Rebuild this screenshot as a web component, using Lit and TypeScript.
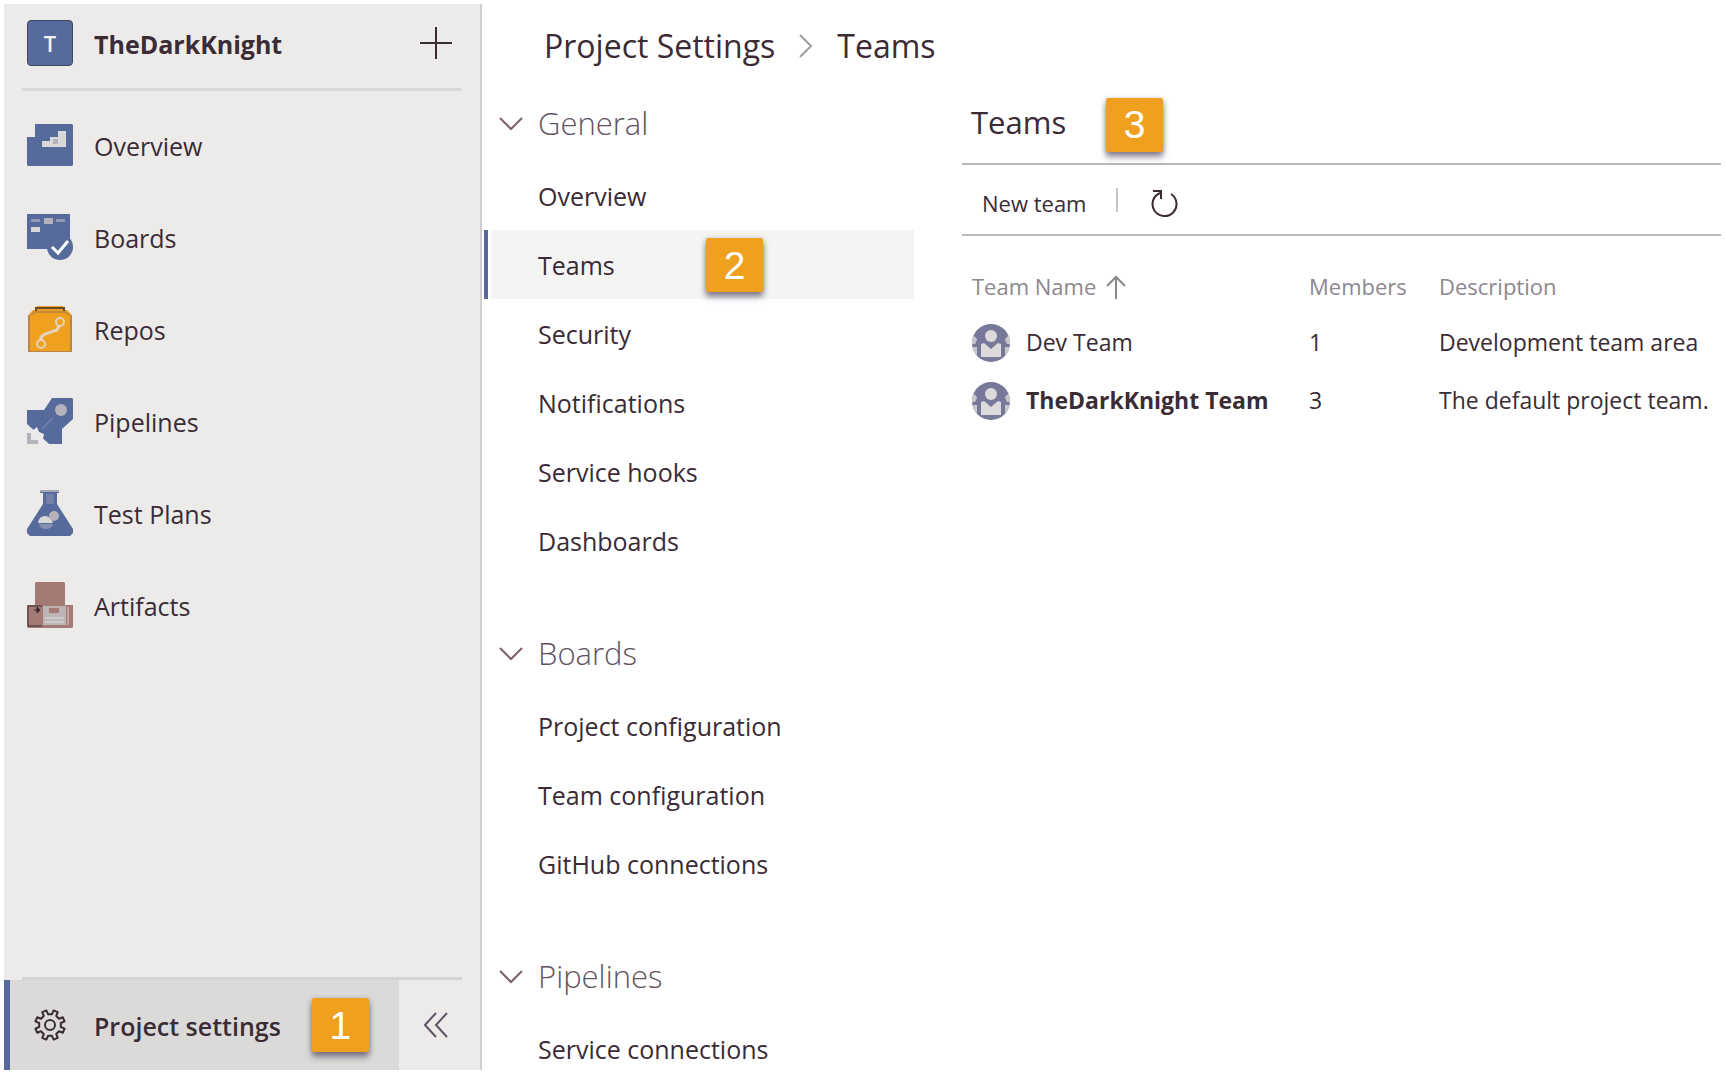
import { LitElement, html, svg, css, nothing } from "lit";
import { customElement, property, state } from "lit/decorators.js";
import { classMap } from "lit/directives/class-map.js";

const BLUE = "#566b9b";
const PALE = "#d9d8d8";
const ORANGE = "#f0a01f";
const BRICK = "#a47b74";
const INK = "#3a2b35";

/** Outline of a cog with evenly spaced, slightly tapered teeth. */
function cogPath(teeth: number, inner: number, outer: number, centre: number): string {
  const step = (Math.PI * 2) / teeth;
  const points: string[] = [];
  for (let i = 0; i < teeth; i++) {
    const mid = -Math.PI / 2 + step * (i + 0.5);
    const corners: Array<[number, number]> = [
      [mid - step * 0.27, inner],
      [mid - step * 0.19, outer],
      [mid + step * 0.19, outer],
      [mid + step * 0.27, inner],
    ];
    for (const [angle, radius] of corners) {
      const x = centre + Math.cos(angle) * radius;
      const y = centre + Math.sin(angle) * radius;
      points.push(`${x.toFixed(2)} ${y.toFixed(2)}`);
    }
  }
  return `M${points.join("L")}Z`;
}

const serviceIcons: Record<string, unknown> = {
  overview: svg`
    <path d="M8 2H45L46 3V43L45 44H1L0 43V15H8Z" fill=${BLUE}/>
    <path d="M15 25V19H23V15H31V9H39V25Z" fill=${PALE}/>
    <path d="M26 17H31V22H26Z" fill="#b5b2bb"/>`,
  boards: svg`
    <path d="M0 0H43V35H0Z" fill=${BLUE}/>
    <path d="M4 5H13V8H4ZM29 5H38V8H29Z" fill="#8f98b4"/>
    <path d="M17 4H26V10H17Z" fill="#b5b2bb"/>
    <path d="M4 13H13V18H4Z" fill=${PALE}/>
    <circle cx="33" cy="33" r="13" fill=${BLUE}/>
    <path d="M25 33L31 39L41 27" fill="none" stroke="#fff" stroke-width="3"/>`,
  repos: svg`
    <path d="M10 0H36V4H40L44 8V46H2V8L6 4H10Z" fill=${ORANGE}/>
    <path d="M9 5V2H37V5" fill="none" stroke="#6b4a2c" stroke-width="2"/>
    <path d="M4 9L8 6H38L42 9" fill="none" stroke="#c28a3c" stroke-width="2"/>
    <path d="M2 9V46H44V9" fill="none" stroke="#b98648" stroke-width="2"/>
    <g fill="none" stroke="#e3d3ba" stroke-width="2">
      <circle cx="14" cy="38" r="4"/>
      <circle cx="33" cy="16" r="4"/>
      <path d="M14 34V31L18 28L30 24L32 20" stroke-width="3"/>
    </g>`,
  pipelines: svg`
    <path d="M25 0H45L46 1V21L35 31V46H22L0 26V12H17Z" fill=${BLUE}/>
    <circle cx="34" cy="12" r="6" fill="#b5b2bb"/>
    <path d="M15 31L26 20" stroke="#8f98b4" stroke-width="1"/>
    <path d="M0 28L5 33L10 29L12 34L17 36L16 41L22 46H0Z" fill="#ecebea"/>
    <path d="M0 35H4V42H11V46H0Z" fill="#b5b2bb"/>`,
  testplans: svg`
    <path d="M13 0H32V3H30V14L46 39V43L43 46H3L0 43V39L16 14V3H13Z" fill=${BLUE}/>
    <path d="M13 1H32" stroke="#a7a7b4" stroke-width="2"/>
    <path d="M19 4H27V14H19Z" fill="#7582a8"/>
    <path d="M11 33Q12 26 18 26Q24 26 26 33Z" fill=${PALE}/>
    <circle cx="27" cy="26" r="5" fill="#b5b2bb"/>
    <path d="M12 34H26Q25 39 19 39Q13 39 12 34Z" fill="#8690b0"/>`,
  artifacts: svg`
    <path d="M8 1L9 0H37L38 1V23H46V45L45 46H1L0 45V23H8Z" fill=${BRICK}/>
    <path d="M16 24H39V43H16Z" fill="#bdb4b5"/>
    <path d="M22 26H32V31H22Z" fill=${BRICK}/>
    <path d="M18 36H37M18 40H37" stroke="#cfcaca" stroke-width="2"/>
    <path d="M41 25V43" stroke="#c2a29d" stroke-width="2"/>
    <path d="M15 24H1V44H15" fill="none" stroke=${INK} stroke-width="1"/>
    <path d="M7 28L13 28M10 25L13 28L10 31Z" fill=${INK} stroke=${INK} stroke-width="1"/>`,
};

@customElement("number-badge")
export class NumberBadge extends LitElement {
  static styles = css`
    :host {
      display: flex;
      align-items: center;
      justify-content: center;
      width: 57px;
      height: 54px;
      border-radius: 2px;
      background: #f0a01f;
      color: #fff;
      font: 39px/1 "Liberation Sans", Arial, sans-serif;
      box-shadow: 0 5px 6px rgba(60, 50, 75, 0.55), 0 1px 5px rgba(60, 50, 75, 0.3);
    }
  `;
  render() {
    return html`<slot></slot>`;
  }
}

interface Service {
  icon: string;
  label: string;
}

const services: Service[] = [
  { icon: "overview", label: "Overview" },
  { icon: "boards", label: "Boards" },
  { icon: "repos", label: "Repos" },
  { icon: "pipelines", label: "Pipelines" },
  { icon: "testplans", label: "Test Plans" },
  { icon: "artifacts", label: "Artifacts" },
];

@customElement("project-sidebar")
export class ProjectSidebar extends LitElement {
  static styles = css`
    :host {
      display: flex;
      flex-direction: column;
      box-sizing: border-box;
      background: #ecebea;
      border-right: 2px solid #d0cfd0;
      min-height: 0;
      overflow: hidden;
    }
    .project {
      display: flex;
      align-items: center;
      gap: 21px;
      height: 87px;
      box-sizing: border-box;
      margin: 0 18px;
      padding: 0 10px 7px 5px;
      border-bottom: 3px solid #dad9d9;
    }
    .tile {
      display: grid;
      place-items: center;
      box-sizing: border-box;
      width: 46px;
      height: 46px;
      border: 1px solid #3f4666;
      border-radius: 4px;
      background: #566b9b;
      color: #f3f1f1;
      font-size: 22px;
      font-weight: 600;
      line-height: 1;
    }
    .name {
      flex: 1;
      font-weight: 700;
    }
    .name,
    .label {
      padding-top: 2px;
    }
    .plain {
      display: grid;
      place-items: center;
      margin: 0;
      padding: 0;
      border: 0;
      background: none;
      color: inherit;
      cursor: pointer;
    }
    svg {
      display: block;
      flex: none;
    }
    .services {
      flex: 1;
      margin: 0;
      padding: 8px 0 0;
      list-style: none;
      min-height: 0;
    }
    a {
      display: flex;
      align-items: center;
      gap: 21px;
      padding-left: 23px;
      color: inherit;
      text-decoration: none;
    }
    .service {
      height: 92px;
    }
    .rule {
      height: 3px;
      margin: 0 18px;
      background: #d4d3d3;
    }
    .footer {
      display: flex;
      height: 90px;
    }
    .settings {
      flex: 1;
      box-sizing: border-box;
      padding-left: 17px;
      border-left: 6px solid #566b9b;
      background: #dbdad9;
      font-weight: 600;
    }
    .settings number-badge {
      margin-left: 10px;
    }
    .gear {
      padding: 0 7px;
    }
    .collapse {
      width: 81px;
      padding-right: 8px;
    }
  `;

  render() {
    return html`
      <div class="project">
        <span class="tile">T</span>
        <span class="name">TheDarkKnight</span>
        <button class="plain" aria-label="Add">
          <svg width="32" height="32" viewBox="0 0 32 32" fill="none" stroke=${INK} stroke-width="2">
            <path d="M16 0V32M0 16H32" />
          </svg>
        </button>
      </div>
      <ul class="services">
        ${services.map(
          (s) => html`<li>
            <a class="service" href="#${s.icon}">
              <svg width="46" height="46" viewBox="0 0 46 46" aria-hidden="true">${serviceIcons[s.icon]}</svg>
              <span class="label">${s.label}</span>
            </a>
          </li>`,
        )}
      </ul>
      <div class="rule"></div>
      <div class="footer">
        <a class="settings" href="#settings" aria-current="page">
          <svg class="gear" width="32" height="32" viewBox="0 0 32 32" fill="none" stroke=${INK} stroke-width="2" aria-hidden="true">
            <path d=${cogPath(8, 11, 15, 16)} stroke-linejoin="round" />
            <circle cx="16" cy="16" r="5" />
          </svg>
          <span class="label">Project settings</span>
          <number-badge>1</number-badge>
        </a>
        <button class="plain collapse" aria-label="Collapse">
          <svg width="24" height="26" viewBox="0 0 24 26" fill="none" stroke="#5d5566" stroke-width="2">
            <path d="M12 1L1 13L12 25M23 1L12 13L23 25" />
          </svg>
        </button>
      </div>
    `;
  }
}

interface Group {
  title: string;
  items: string[];
}

const groups: Group[] = [
  {
    title: "General",
    items: ["Overview", "Teams", "Security", "Notifications", "Service hooks", "Dashboards"],
  },
  {
    title: "Boards",
    items: ["Project configuration", "Team configuration", "GitHub connections"],
  },
  { title: "Pipelines", items: ["Service connections"] },
];

@customElement("settings-nav")
export class SettingsNav extends LitElement {
  @property() selected = "Teams";
  @state() private closed = new Set<string>();

  static styles = css`
    :host {
      display: flex;
      flex-direction: column;
      gap: 41px;
      padding-left: 2px;
    }
    .heading {
      display: flex;
      align-items: center;
      gap: 15px;
      width: 100%;
      height: 75px;
      margin: 0;
      padding: 0 0 0 15px;
      border: 0;
      background: none;
      color: #62545e;
      font: inherit;
      font-size: 31px;
      font-weight: 300;
      text-align: left;
      cursor: pointer;
    }
    h2 {
      margin: 0;
      font-weight: 300;
    }
    ul {
      margin: 0;
      padding: 0;
      list-style: none;
    }
    a {
      position: relative;
      display: flex;
      align-items: center;
      box-sizing: border-box;
      height: 69px;
      padding-left: 50px;
      border-left: 4px solid transparent;
      color: inherit;
      text-decoration: none;
    }
    .selected {
      background: linear-gradient(90deg, #fff 3px, #f4f4f3 3px);
      border-color: #566b9b;
    }
    number-badge {
      position: absolute;
      left: 218px;
      top: 8px;
    }
  `;

  private toggle(title: string) {
    const next = new Set(this.closed);
    if (!next.delete(title)) next.add(title);
    this.closed = next;
  }

  render() {
    return groups.map((g) => {
      const open = !this.closed.has(g.title);
      return html`<section>
        <h2>
          <button class="heading" aria-expanded=${open} @click=${() => this.toggle(g.title)}>
            <svg width="24" height="14" viewBox="0 0 24 14" fill="none" stroke="#7a6266" stroke-width="2" aria-hidden="true">
              <path d="M1 1L12 12L23 1" />
            </svg>
            <span>${g.title}</span>
          </button>
        </h2>
        ${open
          ? html`<ul>
              ${g.items.map(
                (item) => html`<li>
                  <a
                    href="#${item.toLowerCase().replace(/ /g, "-")}"
                    class=${classMap({ selected: item === this.selected })}
                    @click=${() => (this.selected = item)}
                  >
                    <span>${item}</span>
                    ${item === "Teams" ? html`<number-badge>2</number-badge>` : nothing}
                  </a>
                </li>`,
              )}
            </ul>`
          : nothing}
      </section>`;
    });
  }
}

interface Team {
  name: string;
  members: number;
  description: string;
  isDefault: boolean;
}

const teams: Team[] = [
  { name: "Dev Team", members: 1, description: "Development team area", isDefault: false },
  { name: "TheDarkKnight Team", members: 3, description: "The default project team.", isDefault: true },
];

@customElement("teams-panel")
export class TeamsPanel extends LitElement {
  static styles = css`
    :host {
      display: block;
      min-width: 0;
    }
    .title {
      display: flex;
      align-items: center;
      gap: 40px;
      height: 77px;
      padding-left: 9px;
      border-bottom: 2px solid #b9b8bb;
    }
    h1 {
      margin: 0;
      padding-bottom: 4px;
      font-size: 31px;
      font-weight: 400;
    }
    .toolbar {
      display: flex;
      align-items: center;
      height: 69px;
      padding-left: 20px;
      border-bottom: 2px solid #b9b8bb;
    }
    button {
      display: flex;
      margin: 0;
      padding: 8px 0 0;
      border: 0;
      background: none;
      color: inherit;
      font: inherit;
      font-size: 22px;
      cursor: pointer;
    }
    .separator {
      width: 2px;
      height: 24px;
      margin: 0 33px 0 30px;
      background: #c6c5c8;
    }
    table {
      width: 100%;
      margin-top: 24px;
      border-collapse: collapse;
      table-layout: fixed;
      font-size: 23px;
      white-space: nowrap;
    }
    .members {
      width: 130px;
    }
    .description {
      width: 282px;
    }
    th,
    td {
      height: 58px;
      padding: 0;
      text-align: left;
      font-weight: 400;
    }
    th {
      height: 54px;
      color: #8d878f;
      font-size: 22px;
    }
    .cell {
      display: flex;
      align-items: center;
      gap: 16px;
      padding-left: 10px;
    }
    .sort {
      gap: 10px;
    }
    .default {
      font-weight: 700;
    }
  `;

  private avatar(id: number) {
    return html`<svg width="38" height="38" viewBox="0 0 38 38" aria-hidden="true">
      <defs><clipPath id="disc-${id}"><circle cx="19" cy="19" r="19" /></clipPath></defs>
      <g clip-path="url(#disc-${id})">
        <rect width="38" height="38" fill="#78789a" />
        <path d="M0 12Q4 12 5 16L3 20H0ZM38 12Q34 12 33 16L35 20H38ZM0 23H5V31H0ZM38 23H33V31H38Z" fill="#c9c7ca" />
        <path d="M9 33V20L12 19L19 25L26 19L29 20V33Z" fill="#dcdadb" />
        <circle cx="19" cy="12" r="6" fill="#dcdadb" />
      </g>
    </svg>`;
  }

  render() {
    return html`
      <div class="title">
        <h1>Teams</h1>
        <number-badge>3</number-badge>
      </div>
      <div class="toolbar">
        <button>New team</button>
        <span class="separator"></span>
        <button aria-label="Refresh">
          <svg width="28" height="30" viewBox="0 0 28 30" fill="none" stroke=${INK} stroke-width="2">
            <path d="M20 5A12 12 0 1 1 9 4" />
            <path d="M2 2H10V10" />
          </svg>
        </button>
      </div>
      <table>
        <colgroup>
          <col />
          <col class="members" />
          <col class="description" />
        </colgroup>
        <thead>
          <tr>
            <th scope="col">
              <span class="cell sort">
                Team Name
                <svg width="20" height="24" viewBox="0 0 20 24" fill="none" stroke="#8d878f" stroke-width="2" aria-hidden="true">
                  <path d="M10 24V2M1 11L10 2L19 11" />
                </svg>
              </span>
            </th>
            <th scope="col">Members</th>
            <th scope="col">Description</th>
          </tr>
        </thead>
        <tbody>
          ${teams.map(
            (t, i) => html`<tr>
              <td>
                <span class=${classMap({ cell: true, default: t.isDefault })}>${this.avatar(i)}<span>${t.name}</span></span>
              </td>
              <td>${t.members}</td>
              <td>${t.description}</td>
            </tr>`,
          )}
        </tbody>
      </table>
    `;
  }
}

@customElement("app-root")
export class AppRoot extends LitElement {
  static styles = css`
    :host {
      display: grid;
      grid-template-columns: 478px minmax(0, 1fr);
      box-sizing: border-box;
      height: 100vh;
      padding: 4px;
      overflow: hidden;
      background: #fff;
      color: #3a2b35;
      font-family: "Open Sans", "Noto Sans", sans-serif;
      font-size: 25px;
      line-height: 1.36;
    }
    main {
      min-width: 0;
      min-height: 0;
      overflow: hidden;
    }
    .crumbs {
      display: flex;
      align-items: center;
      gap: 24px;
      box-sizing: border-box;
      height: 82px;
      padding: 2px 0 0 62px;
      font-size: 32px;
    }
    .crumbs a {
      color: inherit;
      text-decoration: none;
    }
    .columns {
      display: grid;
      grid-template-columns: 432px minmax(0, 1fr);
      column-gap: 48px;
    }
  `;

  render() {
    return html`
      <project-sidebar></project-sidebar>
      <main>
        <nav class="crumbs" aria-label="Breadcrumb">
          <a href="#settings">Project Settings</a>
          <svg width="14" height="24" viewBox="0 0 14 24" fill="none" stroke="#a29da5" stroke-width="2" aria-hidden="true">
            <path d="M1 1L12 12L1 23" />
          </svg>
          <a href="#teams">Teams</a>
        </nav>
        <div class="columns">
          <settings-nav></settings-nav>
          <teams-panel></teams-panel>
        </div>
      </main>
    `;
  }
}
